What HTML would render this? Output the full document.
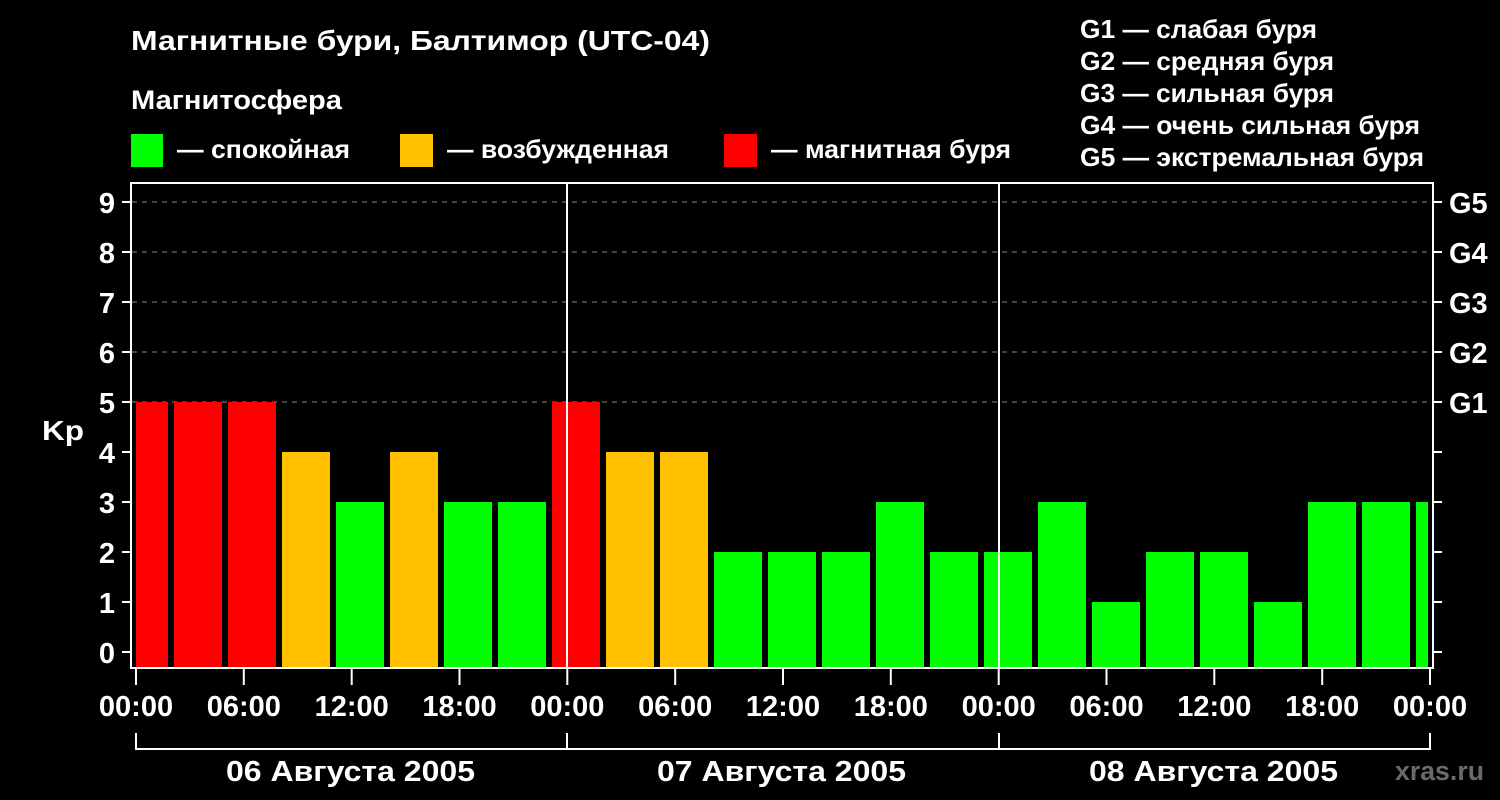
<!DOCTYPE html>
<html><head><meta charset="utf-8"><style>
html,body{margin:0;padding:0;background:#000;width:1500px;height:800px;overflow:hidden}
svg{display:block}
</style></head><body>
<svg width="1500" height="800" xmlns="http://www.w3.org/2000/svg" font-family="Liberation Sans, Arial, sans-serif" font-weight="bold" fill="#fff">
<text x="131" y="50" font-size="28" textLength="579" lengthAdjust="spacingAndGlyphs">Магнитные бури, Балтимор (UTC-04)</text>
<text x="131" y="109" font-size="27" textLength="211" lengthAdjust="spacingAndGlyphs">Магнитосфера</text>
<rect x="131" y="134" width="32" height="33" fill="#00ff00"/>
<text x="177" y="158" font-size="26" textLength="173" lengthAdjust="spacingAndGlyphs">— спокойная</text>
<rect x="400" y="134" width="33" height="33" fill="#ffc000"/>
<text x="447" y="158" font-size="26" textLength="222" lengthAdjust="spacingAndGlyphs">— возбужденная</text>
<rect x="724" y="134" width="33" height="33" fill="#ff0000"/>
<text x="771" y="158" font-size="26" textLength="240" lengthAdjust="spacingAndGlyphs">— магнитная буря</text>
<g font-size="26">
<text x="1080" y="38" textLength="237" lengthAdjust="spacingAndGlyphs">G1 — слабая буря</text>
<text x="1080" y="70" textLength="254" lengthAdjust="spacingAndGlyphs">G2 — средняя буря</text>
<text x="1080" y="102" textLength="254" lengthAdjust="spacingAndGlyphs">G3 — сильная буря</text>
<text x="1080" y="134" textLength="340" lengthAdjust="spacingAndGlyphs">G4 — очень сильная буря</text>
<text x="1080" y="166" textLength="344" lengthAdjust="spacingAndGlyphs">G5 — экстремальная буря</text>
</g>
<g stroke="#888" stroke-width="1" stroke-dasharray="5,5">
<line x1="132" y1="202" x2="1432" y2="202"/><line x1="132" y1="252" x2="1432" y2="252"/>
<line x1="132" y1="302" x2="1432" y2="302"/><line x1="132" y1="352" x2="1432" y2="352"/>
<line x1="132" y1="402" x2="1432" y2="402"/>
</g>
<g>
<rect x="136" y="402" width="32" height="265" fill="#ff0000"/>
<rect x="174" y="402" width="48" height="265" fill="#ff0000"/>
<rect x="228" y="402" width="48" height="265" fill="#ff0000"/>
<rect x="282" y="452" width="48" height="215" fill="#ffc000"/>
<rect x="336" y="502" width="48" height="165" fill="#00ff00"/>
<rect x="390" y="452" width="48" height="215" fill="#ffc000"/>
<rect x="444" y="502" width="48" height="165" fill="#00ff00"/>
<rect x="498" y="502" width="48" height="165" fill="#00ff00"/>
<rect x="552" y="402" width="48" height="265" fill="#ff0000"/>
<rect x="606" y="452" width="48" height="215" fill="#ffc000"/>
<rect x="660" y="452" width="48" height="215" fill="#ffc000"/>
<rect x="714" y="552" width="48" height="115" fill="#00ff00"/>
<rect x="768" y="552" width="48" height="115" fill="#00ff00"/>
<rect x="822" y="552" width="48" height="115" fill="#00ff00"/>
<rect x="876" y="502" width="48" height="165" fill="#00ff00"/>
<rect x="930" y="552" width="48" height="115" fill="#00ff00"/>
<rect x="984" y="552" width="48" height="115" fill="#00ff00"/>
<rect x="1038" y="502" width="48" height="165" fill="#00ff00"/>
<rect x="1092" y="602" width="48" height="65" fill="#00ff00"/>
<rect x="1146" y="552" width="48" height="115" fill="#00ff00"/>
<rect x="1200" y="552" width="48" height="115" fill="#00ff00"/>
<rect x="1254" y="602" width="48" height="65" fill="#00ff00"/>
<rect x="1308" y="502" width="48" height="165" fill="#00ff00"/>
<rect x="1362" y="502" width="48" height="165" fill="#00ff00"/>
<rect x="1416" y="502" width="12" height="165" fill="#00ff00"/>
</g>
<g stroke="#fff" stroke-width="2" fill="none">
<rect x="131" y="183" width="1302" height="485"/>
<line x1="567" y1="183" x2="567" y2="668"/><line x1="999" y1="183" x2="999" y2="668"/>
<path d="M122 202H131M122 252H131M122 302H131M122 352H131M122 402H131M122 452H131M122 502H131M122 552H131M122 602H131M122 652H131"/>
<path d="M1433 202H1442M1433 252H1442M1433 302H1442M1433 352H1442M1433 402H1442M1433 452H1442M1433 502H1442M1433 552H1442M1433 602H1442M1433 652H1442"/>
<path d="M136 668V685M243.8 668V685M351.7 668V685M459.5 668V685M567.3 668V685M675.2 668V685M783 668V685M890.8 668V685M998.7 668V685M1106.5 668V685M1214.3 668V685M1322.2 668V685M1430 668V685"/>
<polyline points="136,733 136,749 1430,749 1430,733"/>
<path d="M567 733V749M999 733V749"/>
</g>
<g font-size="29" text-anchor="end">
<text x="115" y="213">9</text><text x="115" y="263">8</text><text x="115" y="313">7</text>
<text x="115" y="363">6</text><text x="115" y="413">5</text><text x="115" y="463">4</text>
<text x="115" y="513">3</text><text x="115" y="563">2</text><text x="115" y="613">1</text>
<text x="115" y="663">0</text>
</g>
<g font-size="29">
<text x="1449" y="213">G5</text><text x="1449" y="263">G4</text><text x="1449" y="313">G3</text>
<text x="1449" y="363">G2</text><text x="1449" y="413">G1</text>
</g>
<g font-size="29" text-anchor="middle">
<text x="136" y="716">00:00</text><text x="243.8" y="716">06:00</text><text x="351.7" y="716">12:00</text><text x="459.5" y="716">18:00</text>
<text x="567.3" y="716">00:00</text><text x="675.2" y="716">06:00</text><text x="783" y="716">12:00</text><text x="890.8" y="716">18:00</text>
<text x="998.7" y="716">00:00</text><text x="1106.5" y="716">06:00</text><text x="1214.3" y="716">12:00</text><text x="1322.2" y="716">18:00</text>
<text x="1430" y="716">00:00</text>
</g>
<text x="42" y="440" font-size="28" textLength="42" lengthAdjust="spacingAndGlyphs">Kp</text>
<g font-size="29">
<text x="226" y="781" textLength="249" lengthAdjust="spacingAndGlyphs">06 Августа 2005</text>
<text x="657" y="781" textLength="249" lengthAdjust="spacingAndGlyphs">07 Августа 2005</text>
<text x="1089" y="781" textLength="249" lengthAdjust="spacingAndGlyphs">08 Августа 2005</text>
</g>
<text x="1395" y="780" font-size="27" fill="#6a6a6a" textLength="89" lengthAdjust="spacingAndGlyphs">xras.ru</text>
</svg>
</body></html>
